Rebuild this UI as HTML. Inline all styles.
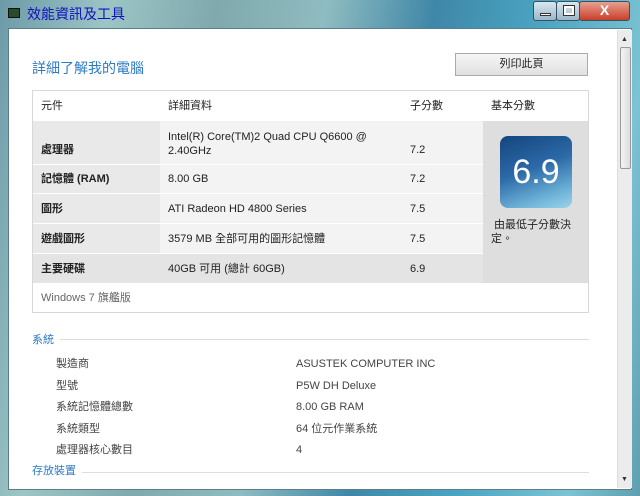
<!DOCTYPE html>
<html><head><meta charset="utf-8"><style>
*{margin:0;padding:0;box-sizing:border-box}
body{width:640px;height:496px;overflow:hidden;position:relative;font-family:"Liberation Sans","Noto Sans CJK TC",sans-serif;font-size:11px;color:#222;
background:linear-gradient(100deg,#6c9aa8 0%,#9cc5c5 15%,#7fa9ad 30%,#8fbcc0 45%,#3f87a8 60%,#4aa5c2 75%,#7cc3d3 90%,#5f9fb0 100%)}
.a{position:absolute}
.client{left:8px;top:28px;width:624px;height:462px;background:#fff;border:1px solid #5a7d8a}
.title{left:27px;top:4px;font-size:14px;color:#1010c0;font-family:"Noto Sans CJK TC",sans-serif}
.btn{top:1px;height:20px;border:1px solid #3a4f60;border-radius:3px;background:linear-gradient(#d8e8f0,#9cb6c8)}
.sb{left:617px;top:30px;width:15px;height:458px;background:#ececec;border-left:1px solid #ddd}
.cell{position:absolute;display:flex;align-items:center;padding-left:8px;line-height:14px}
</style></head><body>
<div class="a" style="left:8px;top:8px;width:12px;height:10px;background:#2a4a2a;border:1px solid #111"></div>
<div class="a title">效能資訊及工具</div>
<div class="a btn" style="left:533px;width:24px"><div class="a" style="left:6px;top:11px;width:11px;height:3px;background:#fff;border:1px solid #333"></div></div>
<div class="a btn" style="left:556px;width:24px"><div class="a" style="left:7px;top:4px;width:10px;height:9px;border:2px solid #fff;outline:1px solid #333"></div></div>
<div class="a btn" style="left:579px;width:51px;background:linear-gradient(#e8a090,#c8402a);color:#fff;font-weight:bold;font-size:14px;text-align:center;line-height:17px">X</div>
<div class="a client"></div>
<div class="a sb"><div class="a" style="left:3px;top:6px;font-size:7px;color:#333">▲</div><div class="a" style="left:2px;top:17px;width:11px;height:122px;background:linear-gradient(90deg,#f4f4f4,#dcdcdc);border:1px solid #999;border-radius:2px"></div><div class="a" style="left:3px;top:446px;font-size:7px;color:#333">▼</div></div>
<div class="a" style="left:32px;top:58px;font-size:14px;color:#2e7bc4">詳細了解我的電腦</div>
<div class="a" style="left:455px;top:53px;width:133px;height:23px;border:1px solid #aaa;background:linear-gradient(#f6f6f6,#e0e0e0);text-align:center;line-height:21px">列印此頁</div>
<div class="a" style="left:32px;top:90px;width:557px;height:223px;border:1px solid #d8d8d8"></div>
<div class="cell" style="left:33px;top:91px;height:30px">元件</div>
<div class="cell" style="left:160px;top:91px;height:30px">詳細資料</div>
<div class="cell" style="left:402px;top:91px;height:30px">子分數</div>
<div class="cell" style="left:483px;top:91px;height:30px">基本分數</div>
<div class="a" style="left:33px;top:121px;width:127px;height:162px;background:#e9e9e9"></div>
<div class="a" style="left:160px;top:121px;width:242px;height:162px;background:#f3f3f3"></div>
<div class="a" style="left:402px;top:121px;width:81px;height:162px;background:#f3f3f3"></div>
<div class="a" style="left:33px;top:253px;width:450px;height:30px;background:#e4e4e4"></div>
<div class="a" style="left:483px;top:121px;width:105px;height:162px;background:#dedede"></div>
<div class="a" style="left:33px;top:164px;width:450px;height:1px;background:#fff"></div>
<div class="a" style="left:33px;top:193px;width:450px;height:1px;background:#fff"></div>
<div class="a" style="left:33px;top:223px;width:450px;height:1px;background:#fff"></div>
<div class="a" style="left:33px;top:253px;width:450px;height:1px;background:#fff"></div>
<div class="cell" style="left:33px;top:128px;height:44px;font-weight:bold">處理器</div>
<div class="cell" style="left:160px;top:121px;height:44px;padding-top:1px">Intel(R) Core(TM)2 Quad CPU Q6600 @<br>2.40GHz</div>
<div class="cell" style="left:402px;top:128px;height:44px">7.2</div>
<div class="cell" style="left:33px;top:165px;height:28px;font-weight:bold">記憶體 (RAM)</div>
<div class="cell" style="left:160px;top:165px;height:28px">8.00 GB</div>
<div class="cell" style="left:402px;top:165px;height:28px">7.2</div>
<div class="cell" style="left:33px;top:194px;height:29px;font-weight:bold">圖形</div>
<div class="cell" style="left:160px;top:194px;height:29px">ATI Radeon HD 4800 Series</div>
<div class="cell" style="left:402px;top:194px;height:29px">7.5</div>
<div class="cell" style="left:33px;top:224px;height:29px;font-weight:bold">遊戲圖形</div>
<div class="cell" style="left:160px;top:224px;height:29px">3579 MB 全部可用的圖形記憶體</div>
<div class="cell" style="left:402px;top:224px;height:29px">7.5</div>
<div class="cell" style="left:33px;top:254px;height:29px;font-weight:bold">主要硬碟</div>
<div class="cell" style="left:160px;top:254px;height:29px">40GB 可用 (總計 60GB)</div>
<div class="cell" style="left:402px;top:254px;height:29px">6.9</div>
<div class="a" style="left:500px;top:136px;width:72px;height:72px;border-radius:8px;background:linear-gradient(160deg,#14457e 0%,#2c6aa8 45%,#6fb3d8 80%,#9bd4ea 100%);color:#fff;font-size:34px;text-align:center;line-height:72px">6.9</div>
<div class="a" style="left:491px;top:218px;width:90px;line-height:14px">&nbsp;由最低子分數決定。</div>
<div class="cell" style="left:33px;top:284px;height:28px;color:#666">Windows 7 旗艦版</div>
<div class="a" style="left:32px;top:331px;color:#2e7bc4">系統</div>
<div class="a" style="left:60px;top:339px;width:529px;height:1px;background:#ddd"></div>
<div class="a" style="left:56px;top:354px;line-height:21.5px;color:#444">製造商<br>型號<br>系統記憶體總數<br>系統類型<br>處理器核心數目</div>
<div class="a" style="left:296px;top:354px;line-height:21.5px;color:#444">ASUSTEK COMPUTER INC<br>P5W DH Deluxe<br>8.00 GB RAM<br>64 位元作業系統<br>4</div>
<div class="a" style="left:32px;top:462px;color:#2e7bc4">存放裝置</div>
<div class="a" style="left:82px;top:472px;width:507px;height:1px;background:#ddd"></div>
</body></html>
